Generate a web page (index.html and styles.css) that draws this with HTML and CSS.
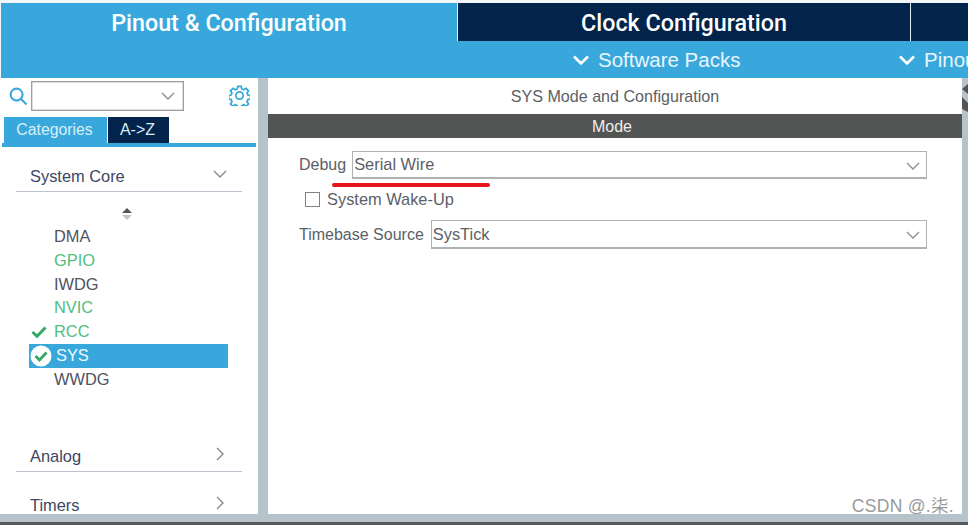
FILE: index.html
```html
<!DOCTYPE html>
<html lang="en">
<head>
<meta charset="utf-8">
<title>SYS Mode and Configuration</title>
<link rel="stylesheet" href="styles.css">
</head>
<body>
<div class="app">
  <header class="header">
    <nav class="tabs">
      <div class="tab tab-active">Pinout &amp; Configuration</div>
      <div class="tab tab-clock">Clock Configuration</div>
      <div class="tab tab-rest"></div>
    </nav>
    <div class="subbar">
      <div class="sub sub-packs">
        <svg class="sub-chev" viewBox="0 0 18 12"><path d="M2 2.5 9 9.5 16 2.5"/></svg>
        <span>Software Packs</span>
      </div>
      <div class="sub sub-pinout">
        <svg class="sub-chev" viewBox="0 0 18 12"><path d="M2 2.5 9 9.5 16 2.5"/></svg>
        <span>Pinout</span>
      </div>
    </div>
  </header>
  <main class="main">
    <aside class="side">
      <div class="search-row">
        <svg class="search-icon" viewBox="0 0 20 20"><circle cx="8" cy="8" r="6.300"/><path d="M12.600 12.600 18.500 18.500"/></svg>
        <div class="search-box">
          <svg class="chev" viewBox="0 0 14 8"><path d="M1 1 7 7 13 1"/></svg>
        </div>
        <svg class="gear" viewBox="0 0 24 24"><path d="M10 1.500h4l.6 3 2.300 1 2.600-1.700 2.800 2.800-1.700 2.600 1 2.300 3 .6v4l-3 .6-1 2.300 1.700 2.600-2.800 2.800-2.600-1.700-2.300 1-.6 3h-4l-.6-3-2.300-1-2.600 1.700-2.800-2.800 1.700-2.600-1-2.300-3-.6v-4l3-.6 1-2.300-1.700-2.600 2.800-2.800 2.600 1.700 2.300-1z"/><circle cx="12" cy="12" r="4.200"/></svg>
      </div>
      <div class="side-tabs">
        <div class="side-tab side-tab-on">Categories</div>
        <div class="side-tab side-tab-off">A-&gt;Z</div>
      </div>
      <div class="tree">
        <div class="cat cat-open">
          <span>System Core</span>
          <svg class="cat-chev" viewBox="0 0 14 8"><path d="M1 1 7 7 13 1"/></svg>
        </div>
        <svg class="sorter" viewBox="0 0 10 12"><path class="up" d="M5 0 10 5H0z"/><path class="down" d="M0 7H10L5 12z"/></svg>
        <ul class="items">
          <li class="item">DMA</li>
          <li class="item item-green">GPIO</li>
          <li class="item">IWDG</li>
          <li class="item item-green">NVIC</li>
          <li class="item item-green">
            <svg class="tick" viewBox="0 0 16 12"><path d="M1.500 6 6 10.300 14.500 1.500"/></svg>RCC
          </li>
          <li class="item item-selected">
            <svg class="tick-round" viewBox="0 0 22 22"><circle cx="11" cy="11" r="10.500"/><path d="M5.500 11 9.500 15 16.500 7.500"/></svg>SYS
          </li>
          <li class="item">WWDG</li>
        </ul>
        <div class="cat cat-analog">
          <span>Analog</span>
          <svg class="cat-right" viewBox="0 0 8 14"><path d="M1 1 7 7 1 13"/></svg>
        </div>
        <div class="cat cat-timers">
          <span>Timers</span>
          <svg class="cat-right" viewBox="0 0 8 14"><path d="M1 1 7 7 1 13"/></svg>
        </div>
      </div>
    </aside>
    <div class="gutter"></div>
    <section class="content">
      <h1 class="title">SYS Mode and Configuration</h1>
      <div class="mode-bar">Mode</div>
      <div class="form">
        <div class="row row-debug">
          <label class="lbl">Debug</label>
          <div class="select select-debug">Serial Wire
            <svg class="chev" viewBox="0 0 14 8"><path d="M1 1 7 7 13 1"/></svg>
          </div>
        </div>
        <div class="row row-check">
          <span class="check"></span>
          <label class="lbl lbl-wide">System Wake-Up</label>
        </div>
        <div class="row row-time">
          <label class="lbl">Timebase Source</label>
          <div class="select select-time">SysTick
            <svg class="chev" viewBox="0 0 14 8"><path d="M1 1 7 7 13 1"/></svg>
          </div>
        </div>
      </div>
      <div class="underline"></div>
      <div class="watermark">CSDN @.柒.</div>
    </section>
    <div class="gutter-right">
      <svg class="split" viewBox="0 0 6 30"><path d="M6 0V10L0 5z"/><path d="M0 13 6 19V28L0 25z"/></svg>
    </div>
  </main>
  <div class="foot"></div>
</div>
</body>
</html>
```

FILE: styles.css
```css
* { box-sizing: border-box; }
html, body { margin: 0; padding: 0; }
body {
  width: 968px;
  height: 525px;
  overflow: hidden;
  background: #fff;
  font-family: "Liberation Sans", Roboto, "Noto Sans CJK SC", sans-serif;
}
.app { display: flex; flex-direction: column; height: 525px; padding-top: 3px; background: #f4f7f9; }
.header { margin-left: 1px; background: #38a8dc; }
.tabs { display: flex; height: 38px; }
.tab {
  display: flex; align-items: center; justify-content: center;
  color: #fff; font-family: Roboto, "Liberation Sans", sans-serif;
  font-size: 23.300px; font-weight: 500; padding-top: 1px;
}
.tab-active { width: 456px; background: #38a8dc; }
.tab-clock { width: 454px; background: #02234a; border-left: 1px solid #e4eef4; border-right: 1px solid #e4eef4; }
.tab-rest { flex: 1; background: #02234a; }
.subbar { height: 37px; display: flex; color: #e9f6fc; font-size: 20.500px; }
.sub { display: flex; align-items: center; gap: 8px; padding-top: 1px; white-space: nowrap; }
.sub-packs { margin-left: 571px; width: 326px; }
.sub-pinout { flex: 1; overflow: hidden; }
.sub-chev { flex: none; width: 18px; height: 12px; fill: none; stroke: #fff; stroke-width: 2.600; }
.main { display: flex; height: 436px; }
.side { width: 258px; background: #fff; overflow: hidden; }
.search-row { display: flex; align-items: center; height: 33px; padding: 3px 0 0 9px; }
.search-icon { flex: none; width: 19px; height: 19px; fill: none; stroke: #38a8dc; stroke-width: 2.200; margin-right: 3px; }
.search-box {
  flex: none; width: 153px; height: 30px; border: 1px solid #9a9fa3;
  display: flex; align-items: center; justify-content: flex-end; padding-right: 8px;
  box-shadow: inset 0 0 0 .5px #bbb;
}
.chev { width: 14px; height: 8px; fill: none; stroke: #8b9094; stroke-width: 1.400; }
.gear { flex: none; width: 21px; height: 21px; fill: none; stroke: #38a8dc; stroke-width: 2; margin-left: 45px; margin-top: -2px; }
.side-tabs { display: flex; height: 32px; margin-left: 4px; padding-top: 6px; }
.side-tab { height: 26px; display: flex; align-items: center; justify-content: center; font-size: 16px; color: #d9eef8; }
.side-tab-on { width: 103px; background: #38a8dc; font-size: 15.800px; padding-right: 2px; }
.side-tab-off { width: 61px; background: #02234a; margin-left: 1px; padding-right: 2px; }
.tree { margin: 0 2px; border-top: 4px solid #38a8dc; }
.cat {
  display: flex; align-items: center; justify-content: space-between;
  margin: 0 14px; padding: 0 14px; height: 31px;
  border-bottom: 1px solid #bcc3cf; color: #3c4763; font-size: 16.400px;
}
.cat-open { margin-top: 14px; }
.cat-chev { width: 14px; height: 8px; fill: none; stroke: #85898e; stroke-width: 1.400; margin-top: -5px; margin-right: 1px; }
.cat-right { width: 8px; height: 14px; fill: none; stroke: #85898e; stroke-width: 1.400; margin-top: -5px; margin-right: 4px; }
.cat-analog { margin-top: 48px; height: 32px; padding-top: 2px; }
.cat-timers { margin-top: 18px; padding-top: 1px; }
.sorter { display: block; width: 10px; height: 12px; margin: 16px 0 0 120px; }
.sorter .up { fill: #555; }
.sorter .down { fill: #c4c4c4; }
.items { list-style: none; margin: 5px 0 0 27px; padding: 0; width: 199px; }
.item {
  position: relative; height: 23.800px; line-height: 23px; padding-left: 25px;
  color: #50535f; font-size: 16.400px;
}
.item-green { color: #52bd82; }
.item-selected { background: #38a8dc; color: #f0f9fd; padding-left: 27px; }
.tick { position: absolute; left: 2px; top: 6px; width: 16px; height: 12px; fill: none; stroke: #34a868; stroke-width: 3; }
.tick-round { position: absolute; left: 1px; top: 1px; width: 22px; height: 22px; }
.tick-round circle { fill: #fff; }
.tick-round path { fill: none; stroke: #34a868; stroke-width: 2.800; }
.gutter { width: 10px; background: #b6c3ca; }
.content { position: relative; width: 694px; background: #fff; color: #4d5157; }
.title { margin: 0; height: 36px; line-height: 37px; text-align: center; font-size: 16.100px; font-weight: 400; color: #5c6065; }
.mode-bar {
  height: 24px; line-height: 25px; background: #535554; color: #eee; text-align: center;
  font-size: 16px; padding-right: 6px;
}
.form { padding: 13px 35px 0 31px; }
.row { display: flex; align-items: center; }
.lbl { font-size: 16px; color: #5c6066; white-space: nowrap; }
.lbl-wide { font-size: 16.400px; }
.row-debug { height: 28px; }
.row-check { height: 28px; margin-top: 6px; padding-left: 6px; }
.row-time { height: 29px; margin-top: 7px; }
.select {
  position: relative; flex: 1; height: 100%; display: flex; align-items: center;
  border: 1px solid #aeb2b5; border-bottom-width: 2px;
  padding-left: 1px; font-size: 16.400px; color: #5c6066; background: #fff;
}
.select .chev { position: absolute; right: 6px; top: 10px; }
.select-debug { margin-left: 6px; }
.select-time { margin-left: 7px; }
.check { width: 15px; height: 15px; border: 1.500px solid #7f8386; margin-right: 7px; }
.underline {
  position: absolute; left: 64px; top: 105px; width: 158px; height: 4px;
  background: #e8161c; border-radius: 2px;
}
.watermark {
  position: absolute; right: 8px; bottom: -2px; font-size: 17.500px; line-height: 20px;
  color: #989a9c; letter-spacing: .3px;
}
.gutter-right { position: relative; flex: 1; background: #b6c3ca; overflow: hidden; }
.split { position: absolute; left: 0; top: 6px; width: 6px; height: 30px; fill: #555; }
.foot { height: 11px; background: linear-gradient(#b6c3ca 0 8px, #54585a 8px); }
```
